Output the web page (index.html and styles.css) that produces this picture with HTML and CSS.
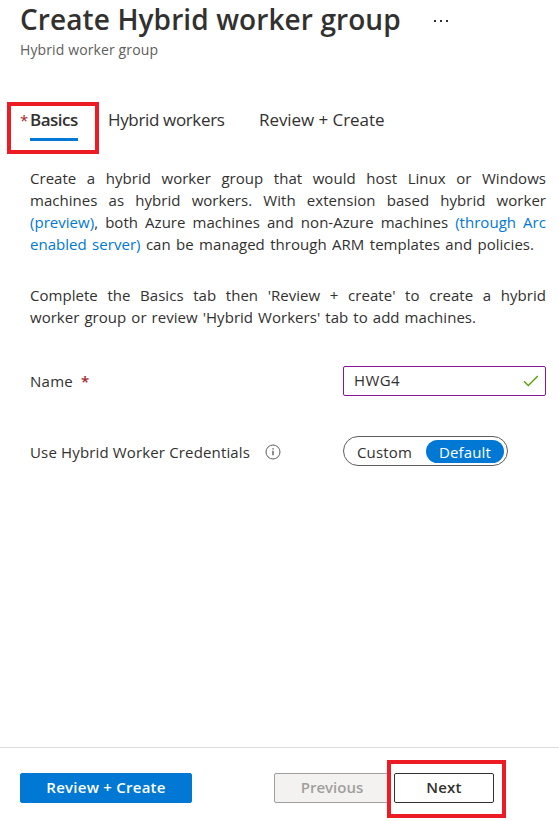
FILE: index.html
```html
<!DOCTYPE html>
<html lang="en">
<head>
<meta charset="utf-8">
<title>Create Hybrid worker group</title>
<link rel="stylesheet" href="styles.css">
</head>
<body>
<div class="page">
  <header class="header">
    <div class="title-row">
      <h1 class="title">Create Hybrid worker group</h1>
      <svg class="more" width="16" height="4" viewBox="0 0 16 4" fill="#323130"><rect x="1" y="1" width="2" height="2"/><rect x="7" y="1" width="2" height="2"/><rect x="13" y="1" width="2" height="2"/></svg>
    </div>
    <div class="subtitle"><span>Hybrid worker group</span></div>
  </header>
  <nav class="tabs">
    <a class="tab tab-active"><span class="tab-star">*</span><span class="tab-label">Basics</span><span class="highlight highlight-tab"></span></a>
    <a class="tab tab-workers">Hybrid workers</a>
    <a class="tab tab-review">Review + Create</a>
  </nav>
  <main class="content">
    <p class="intro">
      <span class="line">Create a hybrid worker group that would host Linux or Windows</span>
      <span class="line">machines as hybrid workers. With extension based hybrid worker</span>
      <span class="line"><a class="link">(preview)</a>, both Azure machines and non-Azure machines <a class="link">(through Arc</a></span>
      <span class="line line-last-intro"><a class="link">enabled server)</a> can be managed through ARM templates and policies.</span>
    </p>
    <p class="intro">
      <span class="line">Complete the Basics tab then 'Review + create' to create a hybrid</span>
      <span class="line line-last-note">worker group or review 'Hybrid Workers' tab to add machines.</span>
    </p>
    <div class="field field-name">
      <div class="label"><span class="name-label">Name</span><span class="required">*</span></div>
      <div class="input"><span class="input-text">HWG4</span>
        <svg width="16" height="12" viewBox="0 0 16 12" fill="none" stroke="#57a300" stroke-width="1.3"><path d="M1 6.2 5.3 10.5 14.8 1"/></svg>
      </div>
    </div>
    <div class="field field-creds">
      <div class="label"><span class="creds-label">Use Hybrid Worker Credentials</span>
        <svg class="info" width="16" height="16" viewBox="0 0 16 16"><circle cx="8" cy="8" r="7" fill="none" stroke="#605e5c"/><path d="M8 6.7V11.2M8 4.3V5.5" stroke="#323130" stroke-width="1.1"/></svg>
      </div>
      <div class="toggle"><span class="option option-off">Custom</span><span class="option option-on">Default</span></div>
    </div>
  </main>
  <footer class="footer">
    <button class="btn btn-primary">Review + Create</button>
    <button class="btn btn-previous">Previous</button>
    <div class="next"><span class="highlight highlight-next"></span><button class="btn btn-next">Next</button></div>
  </footer>
</div>
</body>
</html>
```
FILE: styles.css
```css
* { box-sizing: border-box; }
body { margin: 0; background: #fff; color: #323130; font-family: "Open Sans", "Noto Sans", sans-serif; font-size: 15px; }
.page { width: 559px; height: 821px; display: flex; flex-direction: column; overflow: hidden; }
.header { height: 102px; padding-left: 20px; }
.title-row { display: flex; height: 40px; }
.title { margin: 0; width: 413px; font-size: 28px; font-weight: 600; line-height: 39px; white-space: nowrap; letter-spacing: 0.1px; }
.more { margin-top: 19px; }
.subtitle { font-size: 14px; line-height: 20px; color: #605e5c; letter-spacing: 0.12px; }
.tabs { position: relative; display: flex; height: 65px; padding: 4px 0 0 20px; font-size: 17px; line-height: 28px; white-space: nowrap; }
.tab { display: block; }
.tab-active { display: flex; width: 88px; font-weight: 600; }
.tab-star { width: 10px; font-size: 15px; font-weight: 400; color: #a4262c; }
.tab-label { width: 48px; height: 35px; border-bottom: 3px solid #0078d4; letter-spacing: -0.5px; }
.tab-workers { width: 151px; letter-spacing: -0.35px; }
.tab-review { letter-spacing: -0.06px; }
.highlight { position: absolute; border: 4px solid #ed1c24; pointer-events: none; }
.highlight-tab { left: 7px; top: 0; width: 92px; height: 52px; }
.content { flex: 1; padding-left: 30px; }
.intro { margin: 0 0 29px; width: 516px; line-height: 22px; }
.line { display: block; white-space: nowrap; text-align-last: justify; letter-spacing: 0.03px; }
.line-last-intro { width: 504px; }
.line-last-note { width: 446px; }
.link { color: #0078d4; }
.field { display: flex; width: 516px; height: 30px; }
.label { width: 313px; display: flex; align-items: center; white-space: nowrap; }
.name-label { letter-spacing: 0.25px; }
.creds-label { letter-spacing: 0.15px; }
.required { margin-left: 8px; color: #a4262c; font-weight: 600; }
.info { margin-left: auto; margin-right: 62px; }
.field-name { margin-top: 38px; }
.input { display: flex; align-items: center; justify-content: space-between; width: 203px; height: 30px; padding: 0 6px 0 10px; border: 1px solid #881798; border-radius: 2px; }
.input-text { padding-bottom: 2px; letter-spacing: 0.4px; }
.field-creds { margin-top: 40px; }
.field-creds .label { padding-top: 2px; }
.toggle { display: flex; align-items: center; width: 165px; height: 30px; padding-left: 13px; border: 1px solid #605e5c; border-radius: 15px; }
.option { width: 69px; line-height: 25px; letter-spacing: 0.15px; }
.option-off { padding-top: 2px; }
.option-on { width: 78px; height: 23px; border-radius: 12px; background: #0078d4; color: #fff; text-align: center; }
.footer { display: flex; height: 74px; padding: 25px 0 0 20px; border-top: 1px solid #dcdcdc; }
.btn { height: 30px; padding: 0 0 2px; border: 1px solid #323130; border-radius: 2px; background: #fff; color: #323130; font: 600 15px/26px "Open Sans", sans-serif; }
.btn-primary { width: 172px; border-color: #0078d4; background: #0078d4; color: #fff; letter-spacing: 0.25px; }
.btn-previous { width: 116px; margin-left: 82px; border-color: #a19f9d; background: #f3f2f1; color: #a19f9d; }
.next { position: relative; margin-left: 4px; }
.btn-next { position: relative; width: 100px; letter-spacing: 0.2px; }
.highlight-next { left: -7px; top: -13px; width: 119px; height: 58px; }
```
